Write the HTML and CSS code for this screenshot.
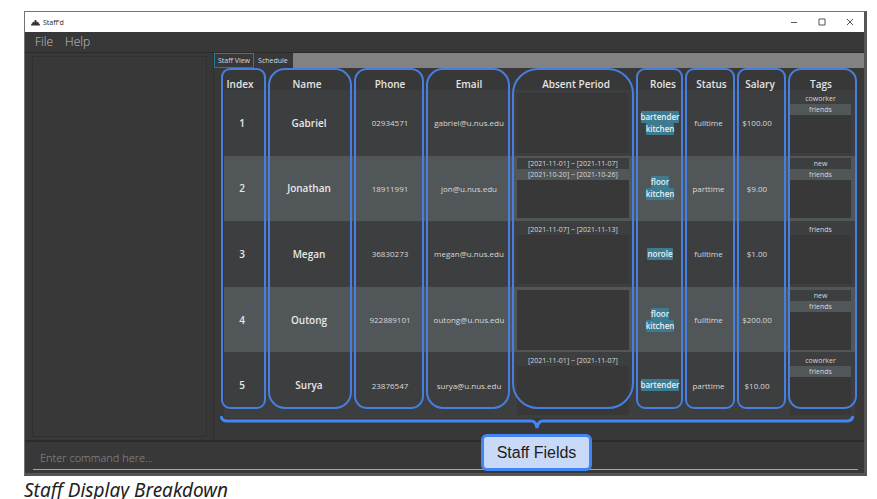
FILE: index.html
```html
<!DOCTYPE html>
<html lang="en">
<head>
<meta charset="utf-8">
<title>Staff Display Breakdown</title>
<link rel="stylesheet" href="styles.css">
</head>
<body>
<figure class="figure">
  <div class="window">
    <header class="titlebar">
      <svg class="logo" viewBox="0 0 24 18" aria-hidden="true"><path d="M9 5a3 3 0 0 1 6 0v4h1a2 2 0 0 1 4 0l1 3h2l1 5H0l1-5h2l1-3a2 2 0 0 1 4 0h1z"/></svg>
      <h1 class="title">Staff'd</h1>
      <div class="controls">
        <button type="button" aria-label="Minimize"><svg viewBox="0 0 8 8"><path d="M1 4.500h6"/></svg></button>
        <button type="button" aria-label="Maximize"><svg viewBox="0 0 8 8"><path d="M1 1h6v6H1z"/></svg></button>
        <button type="button" aria-label="Close"><svg viewBox="0 0 8 8"><path d="M1 1l6 6M7 1l-6 6"/></svg></button>
      </div>
    </header>
    <nav class="menubar"><button type="button">File</button><button type="button">Help</button></nav>
    <main class="main">
      <aside class="side"><div class="result"></div></aside>
      <section class="pane">
        <div class="tabs" role="tablist">
          <button type="button" class="tab tab-active" role="tab" aria-selected="true">Staff View</button>
          <button type="button" class="tab" role="tab" aria-selected="false">Schedule</button>
        </div>
        <div class="view">
          <table class="staff">
            <colgroup><col class="c-index"><col class="c-name"><col class="c-phone"><col class="c-email"><col class="c-absent"><col class="c-roles"><col class="c-status"><col class="c-salary"><col class="c-tags"></colgroup>
            <thead><tr><th class="shift-left">Index</th><th class="shift-left">Name</th><th>Phone</th><th>Email</th><th class="shift">Absent Period</th><th class="shift">Roles</th><th class="shift">Status</th><th class="shift">Salary</th><th>Tags</th></tr></thead>
            <tbody>
              <tr><td class="strong">1</td><td class="strong">Gabriel</td><td>02934571</td><td>gabriel@u.nus.edu</td><td class="list-cell"><ul class="list"></ul></td><td><span class="role">bartender</span><span class="role">kitchen</span></td><td>fulltime</td><td>$100.00</td><td class="list-cell tags-cell"><ul class="list"><li>coworker</li><li>friends</li></ul></td></tr>
              <tr><td class="strong">2</td><td class="strong">Jonathan</td><td>18911991</td><td>jon@u.nus.edu</td><td class="list-cell"><ul class="list"><li>[2021-11-01] ~ [2021-11-07]</li><li>[2021-10-20] ~ [2021-10-26]</li></ul></td><td><span class="role">floor</span><span class="role">kitchen</span></td><td>parttime</td><td>$9.00</td><td class="list-cell tags-cell"><ul class="list"><li>new</li><li>friends</li></ul></td></tr>
              <tr><td class="strong">3</td><td class="strong">Megan</td><td>36830273</td><td>megan@u.nus.edu</td><td class="list-cell"><ul class="list"><li>[2021-11-07] ~ [2021-11-13]</li></ul></td><td><span class="role">norole</span></td><td>fulltime</td><td>$1.00</td><td class="list-cell tags-cell"><ul class="list"><li>friends</li></ul></td></tr>
              <tr><td class="strong">4</td><td class="strong">Outong</td><td>922889101</td><td>outong@u.nus.edu</td><td class="list-cell"><ul class="list"></ul></td><td><span class="role">floor</span><span class="role">kitchen</span></td><td>fulltime</td><td>$200.00</td><td class="list-cell tags-cell"><ul class="list"><li>new</li><li>friends</li></ul></td></tr>
              <tr><td class="strong">5</td><td class="strong">Surya</td><td>23876547</td><td>surya@u.nus.edu</td><td class="list-cell"><ul class="list"><li>[2021-11-01] ~ [2021-11-07]</li></ul></td><td><span class="role">bartender</span></td><td>parttime</td><td>$10.00</td><td class="list-cell tags-cell"><ul class="list"><li>coworker</li><li>friends</li></ul></td></tr>
            </tbody>
          </table>
          <div class="outlines" aria-hidden="true">
            <span class="r-small"></span><span class="r-large"></span><span class="r-medium"></span><span class="r-large"></span><span class="r-huge"></span><span class="r-small"></span><span class="r-small"></span><span class="r-small"></span><span class="r-medium"></span>
          </div>
          <svg class="brace" viewBox="0 0 634 16" preserveAspectRatio="none" aria-hidden="true"><path d="M1 1Q2 6 7 6H311Q316 6 317 13Q318 6 323 6H627Q632 6 633 1"/></svg>
          <div class="callout">Staff Fields</div>
        </div>
      </section>
    </main>
    <footer class="command"><input type="text" aria-label="Command" placeholder="Enter command here..."></footer>
  </div>
  <figcaption>Staff Display Breakdown</figcaption>
</figure>
</body>
</html>
```
FILE: styles.css
```css
* { box-sizing: border-box; }
body { margin: 0; overflow: hidden; background: #fff; font-family: "Open Sans", "Noto Sans", sans-serif; }
button { border: 0; padding: 0; background: none; font: inherit; color: inherit; }
.figure { margin: 11px 10px 0 24px; }
.window { display: flex; flex-direction: column; background: #383838; border: 1px solid #737373; border-right: 3px solid #555; border-bottom: 3px solid #555; }

.titlebar { display: flex; align-items: center; height: 20px; padding-left: 6px; background: #fff; color: #222; }
.logo { width: 9px; height: 7px; margin-right: 3px; fill: #333; }
.title { margin: 0; font-size: 7px; font-weight: 400; }
.controls { display: flex; gap: 20px; margin-left: auto; padding-right: 10px; }
.controls button { width: 8px; height: 8px; }
.controls svg { display: block; width: 8px; height: 8px; fill: none; stroke: #555; stroke-width: 1; }

.menubar { display: flex; gap: 12px; height: 20px; padding-left: 10px; font-size: 12px; font-weight: 300; line-height: 20px; color: #c4c4c4; }
.main { display: grid; grid-template-columns: 189px 1fr; border-top: 1px solid #2b2b2b; border-bottom: 2px solid #2b2b2b; }
.side { padding: 3px 6px 3px 7px; border-right: 1px solid #2f2f2f; }
.result { height: 100%; border: 1px solid #303030; }

.tabs { display: flex; height: 15px; background: #828282; }
.tab { padding: 0 4px; border: 1px solid #383838; border-width: 1px 1px 1px 0; background: #383838; color: #d8d8d8; font-size: 7px; line-height: 12px; }
.tab-active { padding: 0 3px; border: 1px solid #1f7f98; }

.view { position: relative; padding: 0 9px 22px 10px; }
.staff { width: 100%; height: 350px; table-layout: fixed; border-collapse: collapse; text-align: center; color: #d8d8d8; font-size: 8px; }
.c-index { width: 36px; } .c-name { width: 98px; } .c-phone { width: 64px; }
.c-email { width: 94px; } .c-absent { width: 114px; } .c-roles { width: 60px; }
.c-status { width: 37px; } .c-salary { width: 60px; } .c-tags { width: 68px; }
.staff th { height: 22px; padding: 10px 0 0; font-size: 10px; font-weight: 600; line-height: 12px; color: #e4e4e4; white-space: nowrap; }
.staff th.shift { padding-left: 6px; }
.staff th.shift-left { padding-right: 4px; }
.staff tbody tr { background: #3c3e3f; }
.staff tbody tr:nth-child(even) { background: #515658; }
.staff td { padding: 0; white-space: nowrap; }
.staff .strong { font-size: 10px; font-weight: 600; color: #e8e8e8; }
.staff .list-cell { padding: 0 1px; }
.staff .tags-cell { padding: 0 4px 0 3px; }
.list { height: 60px; margin: 0; padding: 0; list-style: none; background: #383838; font-size: 7px; line-height: 11px; }
.list li { height: 11px; background: #3c3e3f; }
.list li:nth-child(even) { background: #515658; }
.role { display: table; margin: 0 auto; padding: 0 2px; border-radius: 1px; background: #3e7b91; color: #e8f0f4; font-size: 8px; font-weight: 600; line-height: 12px; }

.outlines { position: absolute; inset: 0 6px 31px 6px; display: grid; grid-template-columns: 47fr 86fr 72fr 86fr 124fr 49fr 52fr 51fr 71fr; }
.outlines span { margin: 0 1px; border: 2px solid #467fe0; }
.outlines .r-small { border-radius: 9px; }
.outlines .r-medium { border-radius: 13px; }
.outlines .r-large { border-radius: 17px; }
.outlines .r-huge { border-radius: 26px; }
.brace { position: absolute; left: 6px; bottom: 9px; width: calc(100% - 16px); height: 16px; fill: none; stroke: #4285f4; stroke-width: 3; }
.callout { position: absolute; left: 50%; bottom: -31px; width: 111px; height: 37px; margin-left: -58px; border: 3px solid #4285f4; border-radius: 6px; background: #c9daf8; color: #1c1c1c; font: 16px/31px "Liberation Sans", sans-serif; text-align: center; }

.command { padding: 3px 6px 3px 8px; }
.command input { display: block; width: 100%; height: 25px; padding: 0 7px; border: 0; border-bottom: 1px solid #a6a6a6; background: transparent; color: #ddd; font: 300 11px/24px "Open Sans", sans-serif; outline: 0; }
.command input::placeholder { color: #929292; opacity: 1; }
figcaption { margin-top: 2px; color: #222; font-family: "Noto Sans", "Open Sans", sans-serif; font-size: 19px; font-style: italic; line-height: 25px; }
```
